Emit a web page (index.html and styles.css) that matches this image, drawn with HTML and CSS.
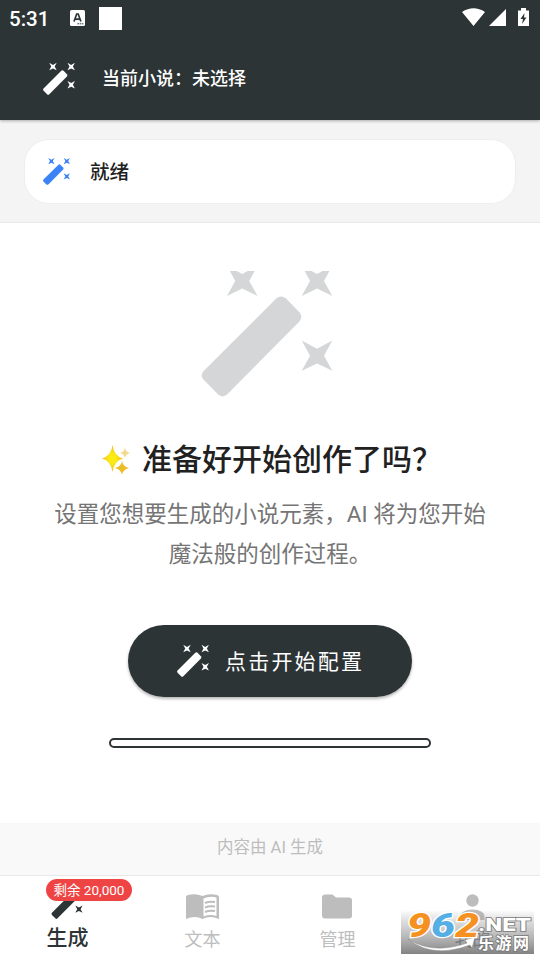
FILE: index.html
```html
<!DOCTYPE html>
<html lang="zh-CN">
<head>
<meta charset="utf-8">
<title>生成</title>
<link rel="stylesheet" href="styles.css">
</head>
<body>
<svg class="defs" width="0" height="0" aria-hidden="true">
  <defs>
    <path id="star" d="M-46-46 0-21 46-46 21 0 46 45 0 23-46 45-21 0Z"/>
    <g id="wand">
      <path d="M70 363 289 144Q303 133 317 144L358 186Q369 200 358 214L141 433Q127 446 113 433L70 389Q58 376 70 363Z"/>
      <use href="#star" x="186" y="92"/>
      <use href="#star" x="411" y="92"/>
      <use href="#star" x="411" y="317"/>
    </g>
  </defs>
</svg>
<div class="app">
  <header class="header">
    <div class="statusbar">
      <span class="clock">5:31</span>
      <svg class="ime" viewBox="0 0 15 16"><rect width="15" height="16" rx="1.5" fill="#fff"/><path d="M4 11.5 6.7 4h1.5l2.700 7.500M5 9.200h5" fill="none" stroke="#2d3436" stroke-width="1.7"/><path d="M7.500 13.800h6" stroke="#2d3436" stroke-dasharray="1.5 .7"/></svg>
      <span class="square"></span>
      <svg class="signals" viewBox="0 0 68 20"><path d="M0 4Q11.500-3.500 23 4L11.500 18ZM27 18 44 1V18ZM56 2.500h3V0h5v2.500h3V18H56Z" fill="#fff"/><path d="M62.500 5 58.500 11H61L60 16 64.500 9.500H62Z" fill="#2d3436"/></svg>
    </div>
    <div class="novel">
      <svg class="wand wand-header" viewBox="63 62 395 379"><use href="#wand"/></svg>
      <span>当前小说：未选择</span>
    </div>
  </header>
  <section class="state">
    <div class="state-card">
      <svg class="wand wand-state" viewBox="63 62 395 379"><use href="#wand"/></svg>
      <span>就绪</span>
    </div>
  </section>
  <main class="main">
    <svg class="wand-hero" viewBox="63 62 395 379"><use href="#wand"/></svg>
    <h1 class="title">
      <svg class="sparkles" viewBox="0 0 28 32"><defs><radialGradient id="gold"><stop offset=".3" stop-color="#fcec12"/><stop offset="1" stop-color="#efbd28"/></radialGradient></defs><path d="M10.500 1Q12 12 21 14.500Q12 17 10.500 28Q9 17 0 14.500Q9 12 10.500 1Z" fill="url(#gold)"/><path d="M20 17Q21 22.500 27 24Q21 25.500 20 31Q19 25.500 13 24Q19 22.500 20 17Z" fill="#edbd27"/><path d="M23 3.500Q23.700 8 28 9Q23.700 10 23 14Q22.300 10 18 9Q22.300 8 23 3.500Z" fill="#f3d98b"/></svg>
      <span>准备好开始创作了吗？</span>
    </h1>
    <p class="desc">设置您想要生成的小说元素，AI 将为您开始<br>魔法般的创作过程。</p>
    <button class="start">
      <svg class="wand wand-start" viewBox="63 62 395 379"><use href="#wand"/></svg>
      <span>点击开始配置</span>
    </button>
    <div class="progress"></div>
  </main>
  <footer class="notice">内容由 AI 生成</footer>
  <nav class="tabs">
    <div class="tab active">
      <svg class="tab-icon wand" viewBox="63 62 395 379"><use href="#wand"/></svg>
      <span>生成</span>
      <b class="badge">剩余 20,000</b>
    </div>
    <div class="tab">
      <svg class="tab-icon" viewBox="0 0 33 26"><path d="M0 3Q0 1.500 2 1Q10-1 16.500 2Q23-1 31 1Q33 1.500 33 3V25Q24 21 16.500 25Q9 21 0 25Z" fill="#bdbdbd"/><path d="M17.500 4.500Q24 1.500 30.500 3.500V22Q24 20 17.500 22.500Z" fill="#fff"/><path d="M19 9Q23.500 7 29 8M19 13.500Q23.500 11.500 29 12.500M19 18Q23.500 16 29 17" fill="none" stroke="#bdbdbd" stroke-width="2"/></svg>
      <span>文本</span>
    </div>
    <div class="tab">
      <svg class="tab-icon" viewBox="0 0 33 26"><path d="M4.500.5H11.500L15 3.500H28Q31 3.500 31 6.500V21.500Q31 24.500 28 24.500H4Q1 24.500 1 21.500V3.500Q1 .5 4.500.5Z" fill="#bdbdbd"/></svg>
      <span>管理</span>
    </div>
    <div class="tab">
      <svg class="tab-icon" viewBox="0 0 33 26"><circle cx="16.500" cy="6.500" r="6.200" fill="#bdbdbd"/><path d="M4.500 26V22Q5 16 16.500 15.500Q28 16 28.500 22V26Z" fill="#bdbdbd"/></svg>
      <span class="mine">我的</span>
    </div>
  </nav>
  <svg class="watermark" viewBox="0 0 133 51">
    <defs><linearGradient id="shade" x2="0" y2="1"><stop offset="0" stop-color="#888" stop-opacity="0"/><stop offset=".3" stop-color="#999" stop-opacity=".38"/><stop offset="1" stop-color="#6c6c6c" stop-opacity=".85"/></linearGradient></defs>
    <rect y="5" width="133" height="44" fill="url(#shade)"/>
    <path d="M7 34Q32 50 66 38L64 35 74 32 71 43 69 40Q31 54 7 34Z" fill="#fff" stroke="#888" stroke-width=".5"/>
    <g class="wm-number"><text x="6" y="32" textLength="24" lengthAdjust="spacingAndGlyphs" fill="#f59120">9</text><text x="30" y="32" textLength="24" lengthAdjust="spacingAndGlyphs" fill="#55afe5">6</text><text x="54" y="32" textLength="24" lengthAdjust="spacingAndGlyphs" fill="#f59120">2</text></g>
    <text class="wm-net" x="77" y="26" textLength="53" lengthAdjust="spacingAndGlyphs">.NET</text>
    <text class="wm-site" x="77" y="44" textLength="51">乐游网</text>
  </svg>
</div>
</body>
</html>
```

FILE: styles.css
```css
* { box-sizing: border-box; }
body { margin: 0; background: #fff; font-family: Roboto, "Noto Sans CJK SC", sans-serif; }
svg { display: block; flex: none; }
.defs { position: absolute; }
.app { position: relative; width: 540px; height: 960px; display: flex; flex-direction: column; overflow: hidden; background: #fff; }
.wand { overflow: visible; fill: currentColor; }
.header { height: 120px; flex: none; background: #2d3436; color: #fff; z-index: 1; box-shadow: 0 1px 3px rgba(0,0,0,.3); }
.statusbar { height: 36px; padding: 0 10px 0 9px; display: flex; align-items: center; }
.clock { width: 61px; font-size: 20.5px; font-weight: 500; padding-top: 2px; }
.ime { width: 15px; height: 16px; }
.square { width: 23px; height: 23px; margin-left: 14px; background: #fff; }
.signals { width: 68px; height: 20px; margin-left: auto; }
.novel { height: 84px; padding-left: 43px; display: flex; align-items: center; gap: 27px; font-size: 18px; font-weight: 500; }
.novel span { padding-bottom: 2px; }
.wand-header { width: 32px; height: 31px; margin-top: 2px; }
.state { height: 103px; flex: none; padding: 19px 24px; background: #f4f4f4; border-bottom: 1px solid #e9e9e9; }
.state-card { height: 65px; padding-left: 18px; border: 1px solid #eee; border-radius: 25px; background: #fff; display: flex; align-items: center; gap: 20px; color: #212121; font-size: 19.5px; font-weight: 500; }
.state-card span { padding-bottom: 2px; }
.wand-state { width: 27px; height: 26px; margin-top: 1px; color: #3b82f6; }
.main { height: 600px; flex: none; padding-top: 48px; display: flex; flex-direction: column; align-items: center; }
.wand-hero { width: 132px; height: 126px; margin-right: 7px; fill: #d5d6d7; }
.title { height: 44px; margin: 41px 0 0; padding-left: 4px; display: flex; align-items: center; gap: 12px; font-size: 30px; line-height: 44px; font-weight: 500; color: #212121; }
.sparkles { width: 28px; height: 32px; }
.desc { margin: 12px 0 0; font-size: 22.5px; line-height: 40px; text-align: center; color: #757575; }
.start { width: 284px; height: 72px; margin: 51px 0 0; padding: 0 0 0 49px; border: 0; border-radius: 36px; background: #2d3436; color: #fff; display: flex; align-items: center; gap: 16px; font: 400 21px Roboto, "Noto Sans CJK SC", sans-serif; letter-spacing: 2.2px; box-shadow: 0 2px 3px rgba(0,0,0,.28); }
.start span { padding-bottom: 2px; }
.wand-start { width: 32px; height: 31px; }
.progress { width: 322px; height: 10px; margin-top: 41px; border: 2px solid #2d3436; border-radius: 5px; background: #fff; }
.notice { height: 53px; flex: none; border-bottom: 1px solid #e8e8e8; background: #f9f9f9; color: #bdbdbd; text-align: center; font-size: 16.5px; line-height: 50px; }
.tabs { height: 84px; display: grid; grid-template-columns: repeat(4, 1fr); }
.tab { position: relative; padding-top: 18px; display: flex; flex-direction: column; align-items: center; color: #bdbdbd; font-size: 18px; line-height: 26px; }
.tab-icon { width: 33px; height: 26px; margin-bottom: 7px; }
.active { color: #2d3436; font-size: 21px; font-weight: 500; }
.active .tab-icon { width: 32px; height: 30px; margin: -5px 2px 6px 0; }
.mine { color: #777; }
.badge { position: absolute; top: 3px; left: 46px; width: 86px; height: 22px; border-radius: 11px; background: #ef4444; color: #fff; text-align: center; font-size: 13.5px; line-height: 22px; font-weight: 400; }
.watermark { position: absolute; left: 401px; top: 905px; width: 133px; height: 51px; }
.wm-number { font: italic 900 34px Roboto, sans-serif; stroke: #fff; stroke-width: 2.5px; paint-order: stroke; }
.wm-net { font: 900 19px Roboto, sans-serif; fill: #fff; stroke: #777; stroke-width: 1.5px; paint-order: stroke; }
.wm-site { font: 700 16px "Noto Sans CJK SC", sans-serif; fill: #fff; stroke: #777; stroke-width: 1.5px; paint-order: stroke; }
```
